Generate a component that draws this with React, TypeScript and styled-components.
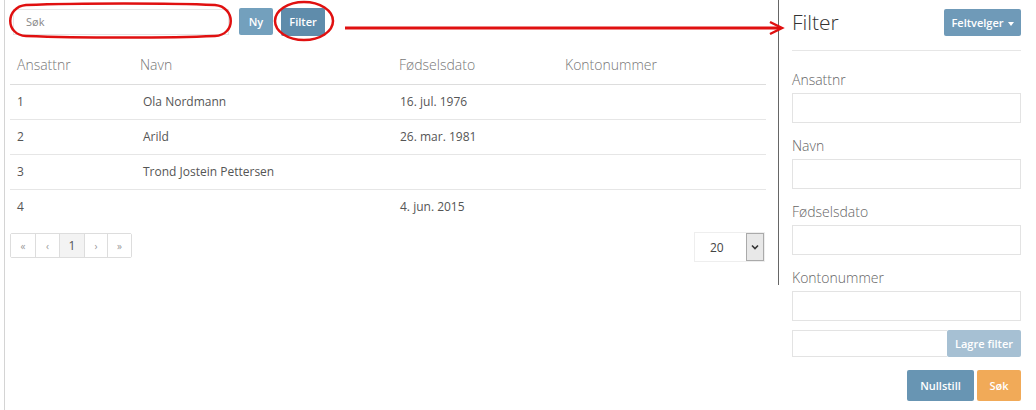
import React from "react";
import styled, { createGlobalStyle } from "styled-components";

const Global = createGlobalStyle`
  html, body { margin: 0; padding: 0; background: #fff; }
  body { font-family: "Open Sans", "Liberation Sans", sans-serif; color: #555; }
  * { box-sizing: border-box; }
`;

const Shell = styled.div`
  position: relative;
  margin-left: 4px;
  border-left: 1px solid #d4d4d4;
  height: 410px;
  width: 1032px;
  display: flex;
  align-items: flex-start;
`;

const LeftPane = styled.div`
  width: 774px;
  height: 285px;
  border-right: 1px solid #666;
  padding: 8px 11px 0 5px;
`;

const Toolbar = styled.div`
  display: flex;
  align-items: center;
  height: 27px;
`;

const SearchInput = styled.input`
  width: 216px;
  height: 26px;
  margin-left: 3px;
  border: 1px solid #e6e6e6;
  padding: 0 12px;
  font-family: inherit;
  font-size: 11px;
  color: #555;
  outline: none;
  &::placeholder { color: #888; }
`;

const Btn = styled.button<{ $bg: string; $w: number; $h?: number; $ml?: number }>`
  background: ${(p) => p.$bg};
  width: ${(p) => p.$w}px;
  height: ${(p) => p.$h ?? 27}px;
  margin-left: ${(p) => p.$ml ?? 0}px;
  border: none;
  border-radius: 2px;
  color: #fff;
  font-family: inherit;
  font-size: 11px;
  font-weight: 600;
  padding: 0;
  display: inline-flex;
  align-items: center;
  justify-content: center;
  gap: 4px;
`;

const Table = styled.table`
  margin-top: 20px;
  width: 756px;
  border-collapse: collapse;
  table-layout: fixed;
`;

const Th = styled.th<{ $w?: number }>`
  width: ${(p) => (p.$w ? `${p.$w}px` : "auto")};
  text-align: left;
  font-weight: 300;
  font-size: 14px;
  color: #777;
  height: 29px;
  padding: 0 7px;
  vertical-align: top;
  border-bottom: 1px solid #ddd;
`;

const Td = styled.td`
  height: 35px;
  font-size: 12px;
  color: #555;
  padding: 0 7px;
  border-bottom: 1px solid #e6e6e6;
`;

const NameTd = styled(Td)`
  padding-left: 10px;
`;

const DateTd = styled(Td)`
  padding-left: 8px;
`;

const LastRow = styled.tr`
  & > td { border-bottom: none; }
`;

const FooterRow = styled.div`
  margin-top: 9px;
  display: flex;
  justify-content: space-between;
  align-items: flex-start;
  width: 756px;
`;

const Pager = styled.div`
  display: flex;
  border: 1px solid #ddd;
  border-radius: 2px;
  height: 25px;
`;

const PageItem = styled.div<{ $active?: boolean; $w: number }>`
  width: ${(p) => p.$w}px;
  display: flex;
  align-items: center;
  justify-content: center;
  font-size: ${(p) => (p.$active ? 12 : 10)}px;
  color: ${(p) => (p.$active ? "#555" : "#999")};
  background: ${(p) => (p.$active ? "#f3f3f3" : "#fff")};
  & + & { border-left: 1px solid #ddd; }
`;

const Select = styled.div`
  display: flex;
  height: 30px;
  width: 71px;
  border: 1px solid #eee;
  margin-top: -1px;
  margin-right: 1px;
`;

const SelectValue = styled.div`
  flex: 1;
  display: flex;
  align-items: center;
  padding-left: 15px;
  font-size: 12px;
  color: #444;
`;

const SelectArrow = styled.div`
  width: 18px;
  background: #e8e8e8;
  border: 1px solid #aaa;
  display: flex;
  align-items: center;
  justify-content: center;
`;

const RightPane = styled.div`
  width: 243px;
  padding: 9px 0 0 13px;
`;

const PanelHead = styled.div`
  display: flex;
  justify-content: space-between;
  align-items: flex-start;
  width: 229px;
  padding-bottom: 14px;
  border-bottom: 1px solid #e6e6e6;
`;

const Title = styled.h2`
  margin: 0;
  font-size: 21px;
  font-weight: 300;
  color: #333;
  line-height: 27px;
`;

const Caret = styled.span`
  border-top: 4px solid #fff;
  border-left: 3px solid transparent;
  border-right: 3px solid transparent;
  display: inline-block;
  margin-top: 2px;
`;

const Form = styled.div`
  width: 229px;
  padding-top: 19px;
  display: flex;
  flex-direction: column;
`;

const Group = styled.div`
  display: flex;
  flex-direction: column;
  margin-bottom: 13px;
`;

const Label = styled.label`
  font-size: 14px;
  font-weight: 300;
  color: #666;
  line-height: 20px;
  margin-bottom: 3px;
`;

const Field = styled.input`
  height: 30px;
  width: 229px;
  border: 1px solid #e3e3e3;
  outline: none;
`;

const InputGroup = styled.div`
  display: flex;
  height: 27px;
  margin-top: -4px;
`;

const GroupField = styled.input`
  flex: 1;
  border: 1px solid #e3e3e3;
  border-right: none;
  outline: none;
  min-width: 0;
`;

const Actions = styled.div`
  display: flex;
  justify-content: flex-end;
  gap: 3px;
  margin-top: 13px;
`;

const Overlay = styled.svg`
  position: absolute;
  left: -5px;
  top: 0;
  pointer-events: none;
`;

const rows = [
  { id: "1", name: "Ola Nordmann", date: "16. jul. 1976" },
  { id: "2", name: "Arild", date: "26. mar. 1981" },
  { id: "3", name: "Trond Jostein Pettersen", date: "" },
  { id: "4", name: "", date: "4. jun. 2015" },
];

export default function App() {
  return (
    <>
      <Global />
      <Shell>
        <LeftPane>
          <Toolbar>
            <SearchInput placeholder="Søk" />
            <Btn $bg="#73a0bd" $w={34} $ml={10}>Ny</Btn>
            <Btn $bg="#5f8cab" $w={44} $h={28} $ml={8}>Filter</Btn>
          </Toolbar>
          <Table>
            <thead>
              <tr>
                <Th $w={123}>Ansattnr</Th>
                <Th $w={259}>Navn</Th>
                <Th $w={166}>Fødselsdato</Th>
                <Th>Kontonummer</Th>
              </tr>
            </thead>
            <tbody>
              {rows.map((r, i) => {
                const cells = (
                  <>
                    <Td>{r.id}</Td>
                    <NameTd>{r.name}</NameTd>
                    <DateTd>{r.date}</DateTd>
                    <Td />
                  </>
                );
                return i === rows.length - 1 ? (
                  <LastRow key={r.id}>{cells}</LastRow>
                ) : (
                  <tr key={r.id}>{cells}</tr>
                );
              })}
            </tbody>
          </Table>
          <FooterRow>
            <Pager>
              <PageItem $w={24}>«</PageItem>
              <PageItem $w={24}>‹</PageItem>
              <PageItem $w={25} $active>1</PageItem>
              <PageItem $w={23}>›</PageItem>
              <PageItem $w={24}>»</PageItem>
            </Pager>
            <Select>
              <SelectValue>20</SelectValue>
              <SelectArrow>
                <svg width="8" height="6" viewBox="0 0 8 6">
                  <path d="M1 1.5 L4 4.5 L7 1.5" stroke="#333" strokeWidth="1.6" fill="none" />
                </svg>
              </SelectArrow>
            </Select>
          </FooterRow>
        </LeftPane>
        <RightPane>
          <PanelHead>
            <Title>Filter</Title>
            <Btn $bg="#6f9ab8" $w={77} $h={27}>
              Feltvelger <Caret />
            </Btn>
          </PanelHead>
          <Form>
            {["Ansattnr", "Navn", "Fødselsdato", "Kontonummer"].map((l) => (
              <Group key={l}>
                <Label>{l}</Label>
                <Field />
              </Group>
            ))}
            <InputGroup>
              <GroupField />
              <Btn $bg="#a6c0d3" $w={74} $h={27}>Lagre filter</Btn>
            </InputGroup>
            <Actions>
              <Btn $bg="#6895b3" $w={67} $h={31}>Nullstill</Btn>
              <Btn $bg="#f1aa58" $w={44} $h={31}>Søk</Btn>
            </Actions>
          </Form>
        </RightPane>
        <Overlay width="1036" height="60" viewBox="0 0 1036 60">
          <path
            d="M26 5 C 80 3, 170 3, 215 5 C 236 7, 236 35, 215 36 C 170 38, 80 38, 26 36 C 5 35, 5 7, 26 5 Z"
            fill="none"
            stroke="#e01010"
            strokeWidth="2.5"
          />
          <ellipse cx="304" cy="21" rx="29" ry="19" fill="none" stroke="#e01010" strokeWidth="2.5" />
          <line x1="345" y1="28" x2="780" y2="28" stroke="#e01010" strokeWidth="3" />
          <path d="M770 22 L782 28 L770 34" fill="none" stroke="#e01010" strokeWidth="2.5" />
        </Overlay>
      </Shell>
    </>
  );
}
